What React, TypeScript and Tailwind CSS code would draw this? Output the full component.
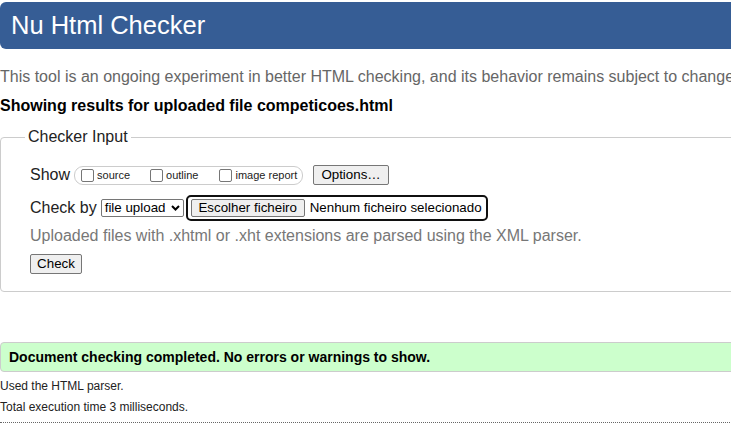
import React from "react";

const font = "font-['Liberation_Sans',Arial,sans-serif]";

const NativeButton = ({ children, className = "" }: { children: React.ReactNode; className?: string }) => (
  <button
    type="button"
    className={`bg-[#efefef] border border-[#767676] rounded-[2px] text-[13.33px] leading-[16px] text-black ${className}`}
  >
    {children}
  </button>
);

const Box = ({ label }: { label: string }) => (
  <label className="flex items-center">
    <span className="w-[13px] h-[13px] border border-[#767676] rounded-[2px] bg-white" />
    <span className="ml-[3px] text-[11px] leading-[13px] text-[#222]">{label}</span>
  </label>
);

export default function App() {
  return (
    <div className={`w-[731px] h-[423px] overflow-hidden bg-white ${font}`}>
      <div className="w-[820px] pt-[2px] text-black">
        <h1 className="h-[47px] flex items-center pl-[11px] bg-[#365d95] text-white text-[25.5px] leading-none rounded-l-[6px]">
          Nu Html Checker
        </h1>

        <p className="mt-[19px] text-[16px] leading-[18px] text-[#666] whitespace-nowrap">
          This tool is an ongoing experiment in better HTML checking, and its behavior remains subject to change
        </p>

        <p className="mt-[11px] text-[16px] leading-[18px] font-bold">
          Showing results for uploaded file competicoes.html
        </p>

        <fieldset className="mt-[13px] border border-[#ccc] rounded-[4px] pl-[29px] pb-[16px]">
          <legend className="ml-[-5px] px-[3px] text-[16px] leading-[18px] text-[#222]">Checker Input</legend>

          <div className="mt-[19px] flex items-center h-[20px]">
            <span className="text-[16px] leading-[18px] text-[#222]">Show</span>
            <div className="ml-[4px] h-[19px] w-[229px] flex items-center pl-[6px] border border-[#ccc] rounded-[9px]">
              <Box label="source" />
              <div className="w-[20px]" />
              <Box label="outline" />
              <div className="w-[21px]" />
              <Box label="image report" />
            </div>
            <NativeButton className="ml-[10px] h-[20px] w-[76px]">Options…</NativeButton>
          </div>

          <div className="mt-[10px] flex items-center h-[26px]">
            <span className="text-[16px] leading-[18px] text-[#222]">Check by</span>
            <div className="ml-[4px] h-[18px] w-[83px] flex items-center justify-between pl-[3px] pr-[3px] border border-[#767676] rounded-[2px] text-[13.33px] leading-[16px]">
              <span>file upload</span>
              <svg width="9" height="6" viewBox="0 0 9 6">
                <polyline points="1,1 4.5,4.5 8,1" fill="none" stroke="#000" strokeWidth="2" />
              </svg>
            </div>
            <div className="ml-[2px] h-[26px] w-[302px] flex items-center pl-[3px] border-2 border-[#101010] rounded-[5px]">
              <NativeButton className="h-[18px] w-[114px]">Escolher ficheiro</NativeButton>
              <span className="ml-[5px] text-[13.33px] leading-[16px]">Nenhum ficheiro selecionado</span>
            </div>
          </div>

          <p className="mt-[6px] text-[16px] leading-[18px] text-[#777]">
            Uploaded files with .xhtml or .xht extensions are parsed using the XML parser.
          </p>

          <NativeButton className="mt-[9px] h-[20px] w-[52px]">Check</NativeButton>
        </fieldset>

        <div className="mt-[50px] h-[30px] flex items-center pl-[8px] bg-[#ccffcc] border border-[#ccc] rounded-l-[4px]">
          <p className="text-[14px] leading-[16px] font-bold">
            Document checking completed. No errors or warnings to show.
          </p>
        </div>

        <p className="mt-[6px] text-[12px] leading-[16px] text-[#222]">Used the HTML parser.</p>
        <p className="mt-[5px] text-[12px] leading-[16px] text-[#222]">Total execution time 3 milliseconds.</p>

        <div className="mt-[7px] border-t border-dotted border-[#666]" />
      </div>
    </div>
  );
}
